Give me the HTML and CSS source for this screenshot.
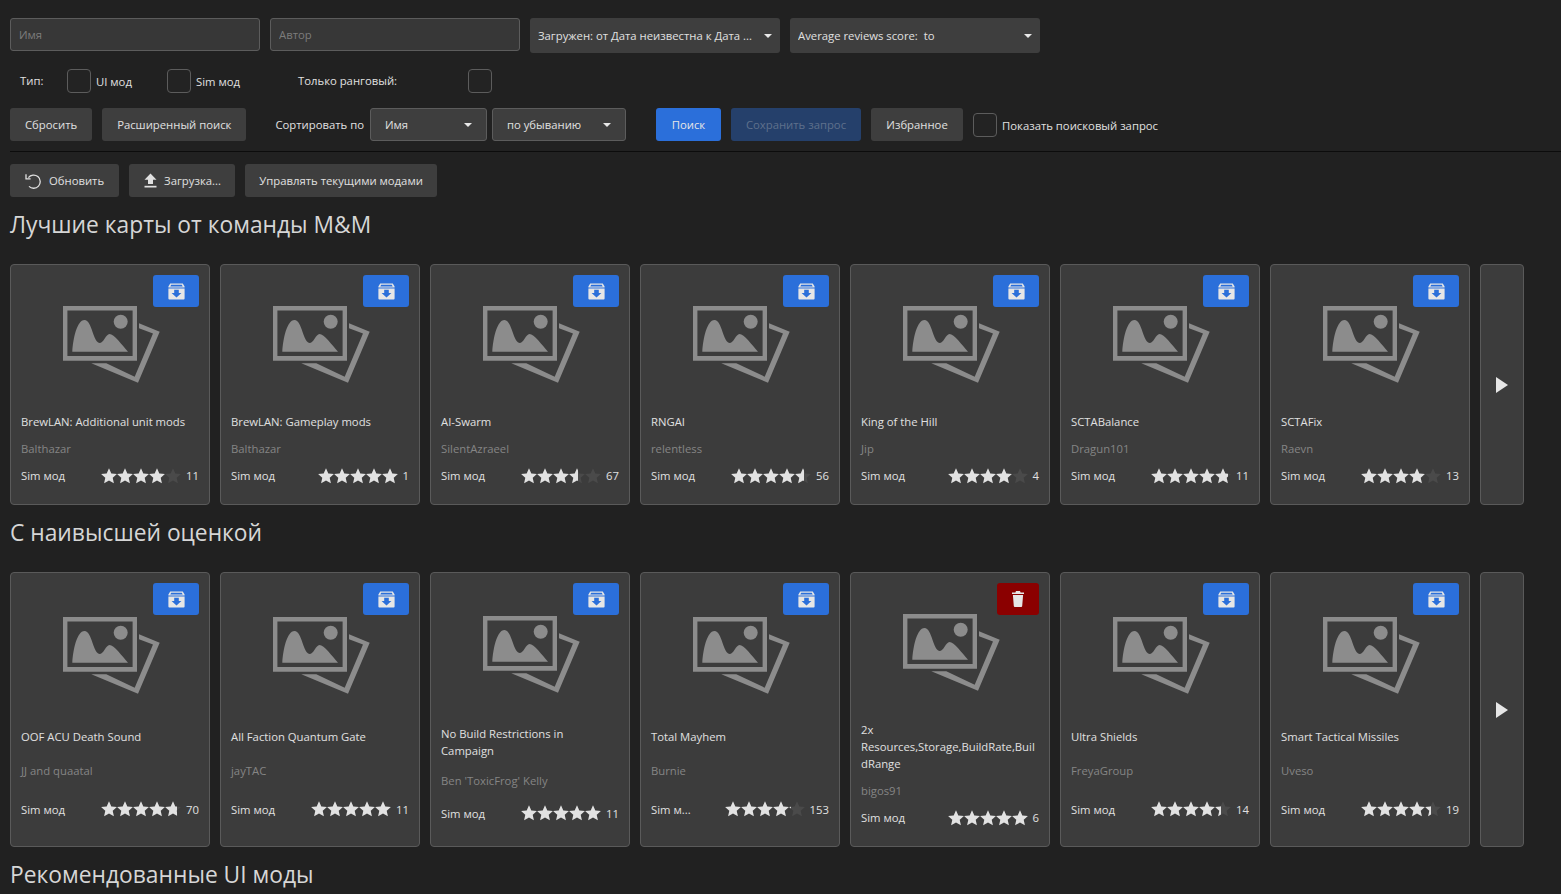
FILE: index.html
```html
<!DOCTYPE html>
<html lang="ru">
<head>
<meta charset="utf-8">
<title>Моды</title>
<link rel="stylesheet" href="styles.css">
</head>
<body>
<svg class="sprite" aria-hidden="true">
  <defs>
    <polygon id="star" points="8,0.2 10.3,5.4 15.9,5.9 11.7,9.7 12.9,15.3 8,12.4 3.1,15.3 4.3,9.7 0.1,5.9 5.7,5.4"/>
    <g id="five">
      <use href="#star"/><use href="#star" x="16"/><use href="#star" x="32"/><use href="#star" x="48"/><use href="#star" x="64"/>
    </g>
    <g id="placeholder">
      <path fill-rule="evenodd" d="M0 0H74V54.7H0ZM4.4 4.6V50H69.6V4.6Z"/>
      <circle cx="57.7" cy="15.7" r="7"/>
      <path d="M9.3 45.7C10 33 14 14 21.5 14C29 14 30 37 37 37C40.5 37 43 28 46.5 28C51 28 59 39 65 45.7Z"/>
      <path d="M76 17.3L96.7 25.7L75 76.7L28.3 57.3H43.3L71.7 70.7L90 27.5L76 22.3Z"/>
    </g>
    <g id="install">
      <path d="M2.2 0.4H14.8L16.6 3.6V4.6H0.4V3.6ZM3.2 1.8L2.3 3.4H14.7L13.8 1.8Z" fill-rule="evenodd"/>
      <path fill-rule="evenodd" d="M0.4 5.4H16.6V15.4Q16.6 16.4 15.6 16.4H1.4Q0.4 16.4 0.4 15.4ZM6.2 6.8V10H3.6L8.5 14.6L13.4 10H10.8V6.8Z"/>
    </g>
  </defs>
</svg>

<main class="page">
  <div class="filters">
    <input class="field" type="text" placeholder="Имя">
    <input class="field" type="text" placeholder="Автор">
    <div class="select flat"><span class="select-text">Загружен: от Дата неизвестна к Дата ...</span><i class="caret"></i></div>
    <div class="select flat"><span class="select-text">Average reviews score:&nbsp; to</span><i class="caret"></i></div>
  </div>

  <div class="types">
    <span class="type-label">Тип:</span>
    <label class="check-group ui"><span class="box"></span><span class="check-text">UI мод</span></label>
    <label class="check-group sim"><span class="box"></span><span class="check-text">Sim мод</span></label>
    <span class="rank-label">Только ранговый:</span>
    <span class="box"></span>
  </div>

  <div class="actions">
    <button class="btn">Сбросить</button>
    <button class="btn">Расширенный поиск</button>
    <span class="sort-label">Сортировать по</span>
    <div class="select outlined sort-name"><span class="select-text">Имя</span><i class="caret"></i></div>
    <div class="select outlined sort-dir"><span class="select-text">по убыванию</span><i class="caret"></i></div>
    <button class="btn primary search-btn">Поиск</button>
    <button class="btn muted">Сохранить запрос</button>
    <button class="btn fav-btn">Избранное</button>
    <label class="check-group query"><span class="box"></span><span class="check-text">Показать поисковый запрос</span></label>
  </div>

  <div class="divider"></div>

  <div class="tools">
    <button class="btn with-icon">
      <svg class="tool-icon" viewBox="0 0 16 16" width="16" height="16"><path d="M3.4 4.6A6.6 6.6 0 1 1 4 13.4" fill="none" stroke="currentColor" stroke-width="1.3"/><path d="M1 1.2V5.8H5.6" fill="none" stroke="currentColor" stroke-width="1.3"/></svg>
      Обновить
    </button>
    <button class="btn with-icon upload">
      <svg class="tool-icon" viewBox="0 0 13 15" width="13" height="15"><path d="M6.5 0.5L12.5 6.8H9V11H4V6.8H0.5Z" fill="currentColor"/><rect x="0.5" y="12.8" width="12" height="1.7" fill="currentColor"/></svg>
      Загрузка...
    </button>
    <button class="btn manage-btn">Управлять текущими модами</button>
  </div>

  <h2 class="section-title">Лучшие карты от команды M&amp;M</h2>
  <section class="rail">
    <article class="card">
      <button class="card-action"><svg width="17" height="17" viewBox="0 0 17 17"><use href="#install"/></svg></button>
      <div class="thumb"><svg width="97" height="78" viewBox="0 0 97 78"><use href="#placeholder"/></svg></div>
      <div class="title">BrewLAN: Additional unit mods</div>
      <div class="author">Balthazar</div>
      <div class="foot"><span class="kind">Sim мод</span><span class="rate"><svg class="stars" viewBox="0 0 80 16"><use href="#five"/></svg><span class="rate-fill" style="width:64px"><svg class="stars" viewBox="0 0 80 16"><use href="#five"/></svg></span></span><span class="count">11</span></div>
    </article>
    <article class="card">
      <button class="card-action"><svg width="17" height="17" viewBox="0 0 17 17"><use href="#install"/></svg></button>
      <div class="thumb"><svg width="97" height="78" viewBox="0 0 97 78"><use href="#placeholder"/></svg></div>
      <div class="title">BrewLAN: Gameplay mods</div>
      <div class="author">Balthazar</div>
      <div class="foot"><span class="kind">Sim мод</span><span class="rate"><svg class="stars" viewBox="0 0 80 16"><use href="#five"/></svg><span class="rate-fill" style="width:80px"><svg class="stars" viewBox="0 0 80 16"><use href="#five"/></svg></span></span><span class="count">1</span></div>
    </article>
    <article class="card">
      <button class="card-action"><svg width="17" height="17" viewBox="0 0 17 17"><use href="#install"/></svg></button>
      <div class="thumb"><svg width="97" height="78" viewBox="0 0 97 78"><use href="#placeholder"/></svg></div>
      <div class="title">AI-Swarm</div>
      <div class="author">SilentAzraeel</div>
      <div class="foot"><span class="kind">Sim мод</span><span class="rate"><svg class="stars" viewBox="0 0 80 16"><use href="#five"/></svg><span class="rate-fill" style="width:57px"><svg class="stars" viewBox="0 0 80 16"><use href="#five"/></svg></span></span><span class="count">67</span></div>
    </article>
    <article class="card">
      <button class="card-action"><svg width="17" height="17" viewBox="0 0 17 17"><use href="#install"/></svg></button>
      <div class="thumb"><svg width="97" height="78" viewBox="0 0 97 78"><use href="#placeholder"/></svg></div>
      <div class="title">RNGAI</div>
      <div class="author">relentless</div>
      <div class="foot"><span class="kind">Sim мод</span><span class="rate"><svg class="stars" viewBox="0 0 80 16"><use href="#five"/></svg><span class="rate-fill" style="width:73px"><svg class="stars" viewBox="0 0 80 16"><use href="#five"/></svg></span></span><span class="count">56</span></div>
    </article>
    <article class="card">
      <button class="card-action"><svg width="17" height="17" viewBox="0 0 17 17"><use href="#install"/></svg></button>
      <div class="thumb"><svg width="97" height="78" viewBox="0 0 97 78"><use href="#placeholder"/></svg></div>
      <div class="title">King of the Hill</div>
      <div class="author">Jip</div>
      <div class="foot"><span class="kind">Sim мод</span><span class="rate"><svg class="stars" viewBox="0 0 80 16"><use href="#five"/></svg><span class="rate-fill" style="width:64px"><svg class="stars" viewBox="0 0 80 16"><use href="#five"/></svg></span></span><span class="count">4</span></div>
    </article>
    <article class="card">
      <button class="card-action"><svg width="17" height="17" viewBox="0 0 17 17"><use href="#install"/></svg></button>
      <div class="thumb"><svg width="97" height="78" viewBox="0 0 97 78"><use href="#placeholder"/></svg></div>
      <div class="title">SCTABalance</div>
      <div class="author">Dragun101</div>
      <div class="foot"><span class="kind">Sim мод</span><span class="rate"><svg class="stars" viewBox="0 0 80 16"><use href="#five"/></svg><span class="rate-fill" style="width:77px"><svg class="stars" viewBox="0 0 80 16"><use href="#five"/></svg></span></span><span class="count">11</span></div>
    </article>
    <article class="card">
      <button class="card-action"><svg width="17" height="17" viewBox="0 0 17 17"><use href="#install"/></svg></button>
      <div class="thumb"><svg width="97" height="78" viewBox="0 0 97 78"><use href="#placeholder"/></svg></div>
      <div class="title">SCTAFix</div>
      <div class="author">Raevn</div>
      <div class="foot"><span class="kind">Sim мод</span><span class="rate"><svg class="stars" viewBox="0 0 80 16"><use href="#five"/></svg><span class="rate-fill" style="width:64px"><svg class="stars" viewBox="0 0 80 16"><use href="#five"/></svg></span></span><span class="count">13</span></div>
    </article>
    <div class="next"><i class="next-arrow"></i></div>
  </section>

  <h2 class="section-title">С наивысшей оценкой</h2>
  <section class="rail">
    <article class="card">
      <button class="card-action"><svg width="17" height="17" viewBox="0 0 17 17"><use href="#install"/></svg></button>
      <div class="thumb"><svg width="97" height="78" viewBox="0 0 97 78"><use href="#placeholder"/></svg></div>
      <div class="title">OOF ACU Death Sound</div>
      <div class="author">JJ and quaatal</div>
      <div class="foot"><span class="kind">Sim мод</span><span class="rate"><svg class="stars" viewBox="0 0 80 16"><use href="#five"/></svg><span class="rate-fill" style="width:76px"><svg class="stars" viewBox="0 0 80 16"><use href="#five"/></svg></span></span><span class="count">70</span></div>
    </article>
    <article class="card">
      <button class="card-action"><svg width="17" height="17" viewBox="0 0 17 17"><use href="#install"/></svg></button>
      <div class="thumb"><svg width="97" height="78" viewBox="0 0 97 78"><use href="#placeholder"/></svg></div>
      <div class="title">All Faction Quantum Gate</div>
      <div class="author">jayTAC</div>
      <div class="foot"><span class="kind">Sim мод</span><span class="rate"><svg class="stars" viewBox="0 0 80 16"><use href="#five"/></svg><span class="rate-fill" style="width:80px"><svg class="stars" viewBox="0 0 80 16"><use href="#five"/></svg></span></span><span class="count">11</span></div>
    </article>
    <article class="card">
      <button class="card-action"><svg width="17" height="17" viewBox="0 0 17 17"><use href="#install"/></svg></button>
      <div class="thumb"><svg width="97" height="78" viewBox="0 0 97 78"><use href="#placeholder"/></svg></div>
      <div class="title">No Build Restrictions in Campaign</div>
      <div class="author">Ben 'ToxicFrog' Kelly</div>
      <div class="foot"><span class="kind">Sim мод</span><span class="rate"><svg class="stars" viewBox="0 0 80 16"><use href="#five"/></svg><span class="rate-fill" style="width:80px"><svg class="stars" viewBox="0 0 80 16"><use href="#five"/></svg></span></span><span class="count">11</span></div>
    </article>
    <article class="card">
      <button class="card-action"><svg width="17" height="17" viewBox="0 0 17 17"><use href="#install"/></svg></button>
      <div class="thumb"><svg width="97" height="78" viewBox="0 0 97 78"><use href="#placeholder"/></svg></div>
      <div class="title">Total Mayhem</div>
      <div class="author">Burnie</div>
      <div class="foot"><span class="kind">Sim м...</span><span class="rate"><svg class="stars" viewBox="0 0 80 16"><use href="#five"/></svg><span class="rate-fill" style="width:66px"><svg class="stars" viewBox="0 0 80 16"><use href="#five"/></svg></span></span><span class="count">153</span></div>
    </article>
    <article class="card">
      <button class="card-action danger"><svg width="12" height="16" viewBox="0 0 12 16"><path fill="currentColor" d="M4 0H8L8.6 1.4H12V3H0V1.4H3.4ZM0.9 4H11.1L10.2 15Q10.1 16 9.2 16H2.8Q1.9 16 1.8 15Z"/></svg></button>
      <div class="thumb"><svg width="97" height="78" viewBox="0 0 97 78"><use href="#placeholder"/></svg></div>
      <div class="title">2x Resources,Storage,BuildRate,BuildRange</div>
      <div class="author">bigos91</div>
      <div class="foot"><span class="kind">Sim мод</span><span class="rate"><svg class="stars" viewBox="0 0 80 16"><use href="#five"/></svg><span class="rate-fill" style="width:80px"><svg class="stars" viewBox="0 0 80 16"><use href="#five"/></svg></span></span><span class="count">6</span></div>
    </article>
    <article class="card">
      <button class="card-action"><svg width="17" height="17" viewBox="0 0 17 17"><use href="#install"/></svg></button>
      <div class="thumb"><svg width="97" height="78" viewBox="0 0 97 78"><use href="#placeholder"/></svg></div>
      <div class="title">Ultra Shields</div>
      <div class="author">FreyaGroup</div>
      <div class="foot"><span class="kind">Sim мод</span><span class="rate"><svg class="stars" viewBox="0 0 80 16"><use href="#five"/></svg><span class="rate-fill" style="width:70px"><svg class="stars" viewBox="0 0 80 16"><use href="#five"/></svg></span></span><span class="count">14</span></div>
    </article>
    <article class="card">
      <button class="card-action"><svg width="17" height="17" viewBox="0 0 17 17"><use href="#install"/></svg></button>
      <div class="thumb"><svg width="97" height="78" viewBox="0 0 97 78"><use href="#placeholder"/></svg></div>
      <div class="title">Smart Tactical Missiles</div>
      <div class="author">Uveso</div>
      <div class="foot"><span class="kind">Sim мод</span><span class="rate"><svg class="stars" viewBox="0 0 80 16"><use href="#five"/></svg><span class="rate-fill" style="width:70px"><svg class="stars" viewBox="0 0 80 16"><use href="#five"/></svg></span></span><span class="count">19</span></div>
    </article>
    <div class="next"><i class="next-arrow"></i></div>
  </section>

  <h2 class="section-title">Рекомендованные UI моды</h2>
</main>
</body>
</html>
```

FILE: styles.css
```css
* { box-sizing: border-box; }

html, body {
  margin: 0;
  height: 100%;
  overflow: hidden;
  background: #212121;
}

body {
  font-family: "Open Sans", "Noto Sans", sans-serif;
  font-size: 11.3px;
  line-height: 17px;
  color: #e0e0e0;
}

.sprite { position: absolute; width: 0; height: 0; }

.page { padding-top: 18px; }

/* top filters */
.filters {
  display: flex;
  align-items: flex-start;
  gap: 10px;
  padding-left: 10px;
}

.field {
  width: 250px;
  height: 33px;
  padding: 0 8px;
  background: #373737;
  border: 1px solid #5c5c5c;
  border-radius: 3px;
  font: inherit;
  color: #dcdcdc;
  outline: none;
}
.field::placeholder { color: #7c7c7c; opacity: 1; }

.select {
  display: flex;
  align-items: center;
  justify-content: space-between;
  background: #3e3e3e;
  border-radius: 3px;
}
.select-text { white-space: nowrap; overflow: hidden; }
.select.flat { width: 250px; height: 35px; padding: 0 8px; }
.select.outlined {
  height: 33px;
  padding: 0 14px;
  border: 1px solid #5c5c5c;
}
.sort-name { width: 117px; margin-right: 5px; }
.sort-dir { width: 134px; }

.caret {
  flex: none;
  width: 0;
  height: 0;
  border-left: 4px solid transparent;
  border-right: 4px solid transparent;
  border-top: 4px solid #e8e8e8;
}

/* type row */
.types {
  display: flex;
  align-items: center;
  height: 24px;
  margin-top: 16px;
  padding-left: 20px;
}
.type-label { width: 47px; padding-bottom: 2px; }
.check-group { display: flex; align-items: center; gap: 5px; }
.check-group.ui { width: 100px; }
.check-group.sim { width: 131px; }
.rank-label { width: 170px; padding-bottom: 2px; }

.box {
  flex: none;
  display: block;
  width: 24px;
  height: 24px;
  background: #232323;
  border: 1px solid #5c5c5c;
  border-radius: 4px;
}

/* action row */
.actions {
  display: flex;
  align-items: center;
  height: 33px;
  margin-top: 15px;
  padding-left: 10px;
}

.btn {
  flex: none;
  display: inline-flex;
  align-items: center;
  justify-content: center;
  height: 33px;
  padding: 0 15px;
  background: #3e3e3e;
  border: 0;
  border-radius: 3px;
  font: inherit;
  color: #e0e0e0;
  white-space: nowrap;
}
.actions .btn { margin-right: 10px; }
.btn.primary { background: #2b6fda; color: #e6e6e6; }
.btn.muted { background: #25406b; color: #5f708c; }
.search-btn { width: 65px; margin-left: 30px; }
.fav-btn { width: 92px; }

.sort-label { margin-left: 19px; margin-right: 6px; }
.check-group.query { height: 24px; }
.query .check-text { padding-top: 2px; }

.divider {
  height: 1px;
  margin: 10px 0 12px 10px;
  background: #0c0c0c;
}

/* tool row */
.tools {
  display: flex;
  gap: 10px;
  padding-left: 10px;
}
.with-icon { gap: 8px; justify-content: flex-start; }
.upload { width: 106px; gap: 7px; padding-right: 0; }
.manage-btn { width: 192px; padding: 0; }
.tool-icon { flex: none; }

/* sections */
.section-title {
  margin: 11px 0 23px;
  padding-left: 10px;
  font-size: 22.8px;
  font-weight: 400;
  line-height: 33px;
  color: #d6d6d6;
}

.rail {
  display: flex;
  gap: 10px;
  padding-left: 10px;
}

.card {
  position: relative;
  flex: none;
  width: 200px;
  display: flex;
  flex-direction: column;
  background: #3c3c3c;
  border: 1px solid #5a5a5a;
  border-radius: 4px;
}

.card-action {
  position: absolute;
  top: 10px;
  right: 10px;
  display: flex;
  align-items: center;
  justify-content: center;
  width: 46px;
  height: 32px;
  padding: 0;
  background: #2b6fda;
  border: 0;
  border-radius: 3px;
  color: #e6e6e6;
  fill: #e6e6e6;
}
.card-action.danger { width: 42px; background: #8b0000; }

.thumb {
  flex: 3 0 auto;
  display: flex;
  align-items: flex-end;
  padding: 41px 0 19px 52px;
  color: #8c8c8c;
  fill: #8c8c8c;
}

.title {
  flex: 8 0 auto;
  display: flex;
  align-items: center;
  padding: 0 10px;
  margin-top: 10px;
  overflow-wrap: anywhere;
  color: #e0e0e0;
}

.author {
  flex: 6 0 auto;
  display: flex;
  align-items: center;
  margin-top: 10px;
  padding: 0 10px;
  color: #858585;
}

.foot {
  flex: 17 0 auto;
  display: flex;
  align-items: center;
  margin-top: 10px;
  padding: 0 10px 20px;
}
.kind { flex: 1; min-width: 0; white-space: nowrap; }
.count { flex: none; margin-left: 5px; }

.rate {
  position: relative;
  flex: none;
  display: block;
  width: 80px;
  height: 16px;
  fill: #4a4a4a;
}
.stars { display: block; width: 80px; height: 16px; }
.rate-fill {
  position: absolute;
  top: 0;
  left: 0;
  height: 16px;
  overflow: hidden;
  fill: #e2e2e2;
}

.next {
  flex: none;
  width: 44px;
  display: flex;
  align-items: center;
  justify-content: center;
  background: #3c3c3c;
  border: 1px solid #5a5a5a;
  border-radius: 4px;
}
.next-arrow {
  display: block;
  width: 0;
  height: 0;
  border-top: 8px solid transparent;
  border-bottom: 8px solid transparent;
  border-left: 12px solid #e6e6e6;
}
```
